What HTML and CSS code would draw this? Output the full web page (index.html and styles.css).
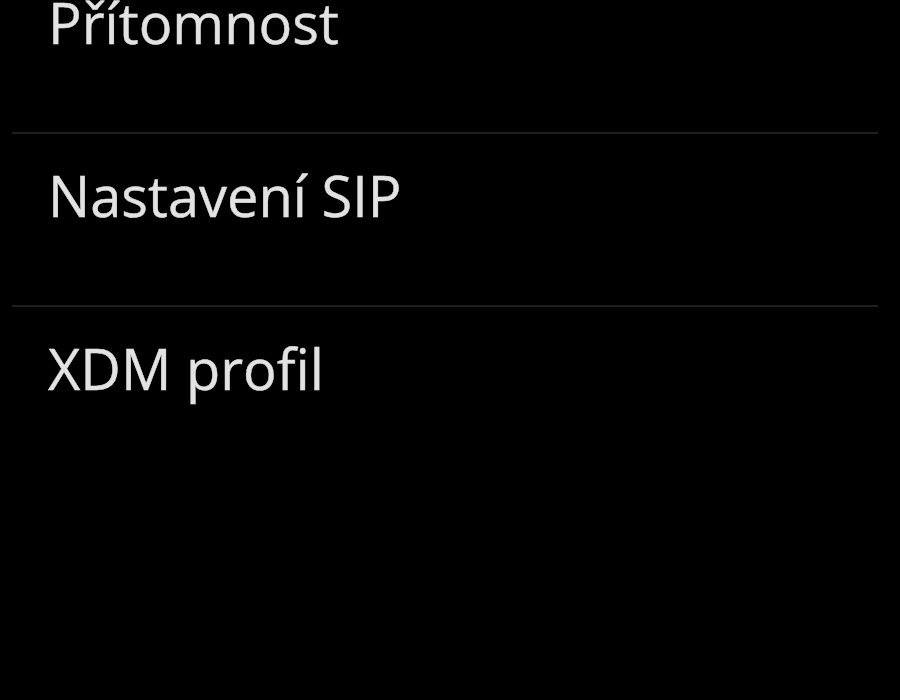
FILE: index.html
```html
<!DOCTYPE html>
<html lang="cs">
<head>
<meta charset="utf-8">
<title>Nastavení</title>
<link rel="stylesheet" href="styles.css">
</head>
<body>
<ul class="menu">
  <li class="item item-first">Přítomnost</li>
  <li class="item">Nastavení SIP</li>
  <li class="item item-last">XDM profil</li>
</ul>
</body>
</html>
```
FILE: styles.css
```css
html, body {
  margin: 0;
  padding: 0;
  background: #000;
  width: 900px;
  height: 700px;
  overflow: hidden;
}
.menu {
  list-style: none;
  margin: 0;
  padding: 0 22px 0 12px;
  display: flex;
  flex-direction: column;
}
.item {
  font-family: "Open Sans", "Liberation Sans", sans-serif;
  font-size: 56px;
  font-weight: 500;
  line-height: 62px;
  color: #e2e2e2;
  padding: 30px 0 79px 36px;
  border-bottom: 2px solid #1f1f1f;
  -webkit-text-stroke: 0.4px #e2e2e2;
}
.item-first {
  padding-top: 0;
  margin-top: -9px;
}
.item-last {
  border-bottom: none;
}
```
